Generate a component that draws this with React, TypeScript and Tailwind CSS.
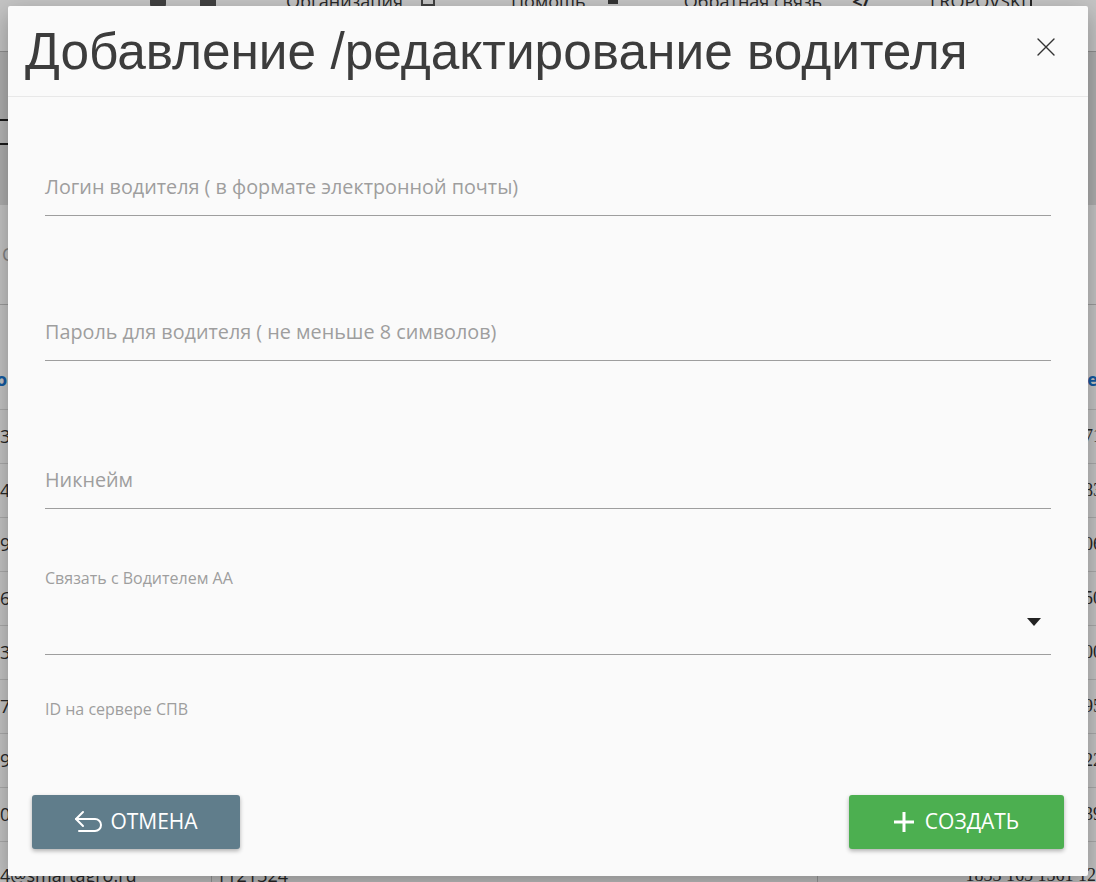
import React from 'react';

const leftCells = ['3', '4', '9', '6', '3', '7', '9', '0'];
const rightCells = ['71', '83', '06', '50', '00', '95', '22', '39'];

const BackgroundPage: React.FC = () => {
  return (
    <div className="w-[1096px] h-[882px] bg-white overflow-hidden font-['Open_Sans',sans-serif] text-[#333] flex flex-col">
      {/* Top navigation */}
      <div className="h-[52px] shrink-0 flex items-start text-[18px] leading-[18px] pl-[150px] border-b border-[#bbb]">
        <span className="-mt-[8px] w-[16px] h-[16px] bg-[#555] rounded-sm" />
        <span className="-mt-[8px] ml-[34px] w-[16px] h-[16px] bg-[#555]" />
        <span className="-mt-[8px] ml-[70px]">Организация</span>
        <span className="-mt-[8px] ml-[18px] w-[14px] h-[14px] border-2 border-[#555]" />
        <span className="-mt-[8px] ml-[76px]">Помощь</span>
        <span className="-mt-[8px] ml-[22px] w-[10px] h-[12px] bg-[#444]" />
        <span className="-mt-[8px] ml-[66px]">Обратная связь</span>
        <span className="-mt-[8px] ml-[30px] font-bold">&lt;/</span>
        <span className="-mt-[8px] ml-[60px] border-r-2 border-[#333] pr-1">LROPOVSKI</span>
      </div>
      {/* Toolbar */}
      <div className="h-[153px] shrink-0 bg-[#e3e3e3] pt-[67px]">
        <div className="-ml-[20px] w-[400px] h-[26px] border-2 border-[#222] bg-[#ededed]" />
      </div>
      {/* Search */}
      <div className="h-[100px] shrink-0 flex items-center border-b border-[#ccc] pl-[2px] text-[18px] text-[#aaa]">С</div>
      {/* Table header */}
      <div className="h-[105px] shrink-0 flex items-end pb-[16px] border-b border-[#ddd] text-[18px] font-bold text-[#1976d2] justify-between">
        <span className="-ml-[4px]">о</span>
        <span className="-mr-[2px]">е</span>
      </div>
      {leftCells.map((c, i) => (
        <div
          key={i}
          className="h-[54px] shrink-0 flex items-center justify-between border-b border-[#ddd] text-[18px]"
        >
          <span>{c}</span>
          <span className="font-['Liberation_Serif',serif] -mr-[6px]">{rightCells[i]}</span>
        </div>
      ))}
      <div className="h-[54px] shrink-0 flex items-start text-[18px]">
        <span className="w-[212px] border-r border-[#ccc] h-full pt-[20px]">4@smartagro.ru</span>
        <span className="ml-[4px] w-[602px] border-r border-[#ccc] h-full pt-[20px]">1121324</span>
        <span className="ml-auto pt-[20px] font-['Liberation_Serif',serif]">1833 165 1561 12</span>
      </div>
    </div>
  );
};

const UnderlineField: React.FC<{ label: string; top: number }> = ({ label, top }) => (
  <div style={{ marginTop: top }} className="border-b border-[#9e9e9e] pb-[16px]">
    <div className="text-[19.8px] leading-[24px] text-[#9e9e9e] whitespace-nowrap">{label}</div>
  </div>
);

export default function App() {
  return (
    <div className="relative w-[1096px] h-[882px] overflow-hidden">
      <BackgroundPage />
      {/* Overlay */}
      <div className="absolute inset-0 bg-black/[0.23]" />

      {/* Modal */}
      <div className="absolute left-[8px] top-[6px] w-[1080px] h-[870px] bg-[#fafafa] rounded-[2px] shadow-[0_8px_24px_rgba(0,0,0,0.3)] flex flex-col font-['Open_Sans',sans-serif]">
        {/* Header */}
        <div className="h-[91px] shrink-0 flex items-start justify-between border-b border-[#e8e8e8] pl-[17px] pr-[29px]">
          <h2 className="mt-[16px] text-[51.4px] leading-[58px] text-[#3c3c3c] font-['Liberation_Sans',Arial,sans-serif] font-normal whitespace-nowrap">
            Добавление /редактирование водителя
          </h2>
          <button className="mt-[28px] text-[#333]">
            <svg width="26" height="26" viewBox="0 0 26 26" fill="none" stroke="currentColor" strokeWidth="1.4" strokeLinecap="round">
              <path d="M5 5 21 21M21 5 5 21" />
            </svg>
          </button>
        </div>

        {/* Body */}
        <div className="flex-1 px-[37px]">
          <UnderlineField label="Логин водителя ( в формате электронной почты)" top={78} />
          <UnderlineField label="Пароль для водителя ( не меньше 8 символов)" top={104} />
          <UnderlineField label="Никнейм" top={107} />

          {/* Select */}
          <div className="mt-[59px] border-b border-[#9e9e9e]">
            <div className="text-[16px] leading-[20px] text-[#9e9e9e]">Связать с Водителем АА</div>
            <div className="h-[66px] flex items-start justify-end pr-[10px] pt-[30px]">
              <svg width="14" height="8" viewBox="0 0 14 8">
                <polygon points="0,0 14,0 7,8" fill="#222" />
              </svg>
            </div>
          </div>

          <div className="mt-[44px] text-[16px] leading-[20px] text-[#9e9e9e]">ID на сервере СПВ</div>
        </div>

        {/* Footer */}
        <div className="flex justify-between px-[24px] pb-[27px]">
          <button className="w-[208px] h-[54px] bg-[#607d8b] rounded-[3px] shadow-[0_2px_4px_rgba(0,0,0,0.3)] flex items-center justify-center gap-[6px] text-white text-[21px] font-medium uppercase">
            <svg width="30" height="24" viewBox="0 0 30 24" fill="none" stroke="currentColor" strokeWidth="2" strokeLinecap="round" strokeLinejoin="round">
              <path d="M9 2 2 9l7 7" />
              <path d="M2 9h19a6 6 0 0 1 0 12H5" />
            </svg>
            <span>Отмена</span>
          </button>
          <button className="w-[215px] h-[54px] bg-[#4caf50] rounded-[3px] shadow-[0_2px_4px_rgba(0,0,0,0.3)] flex items-center justify-center gap-[11px] text-white text-[21px] font-medium uppercase">
            <svg width="20" height="20" viewBox="0 0 20 20" fill="none" stroke="currentColor" strokeWidth="3">
              <path d="M10 0v20M0 10h20" />
            </svg>
            <span>Создать</span>
          </button>
        </div>
      </div>
    </div>
  );
}
